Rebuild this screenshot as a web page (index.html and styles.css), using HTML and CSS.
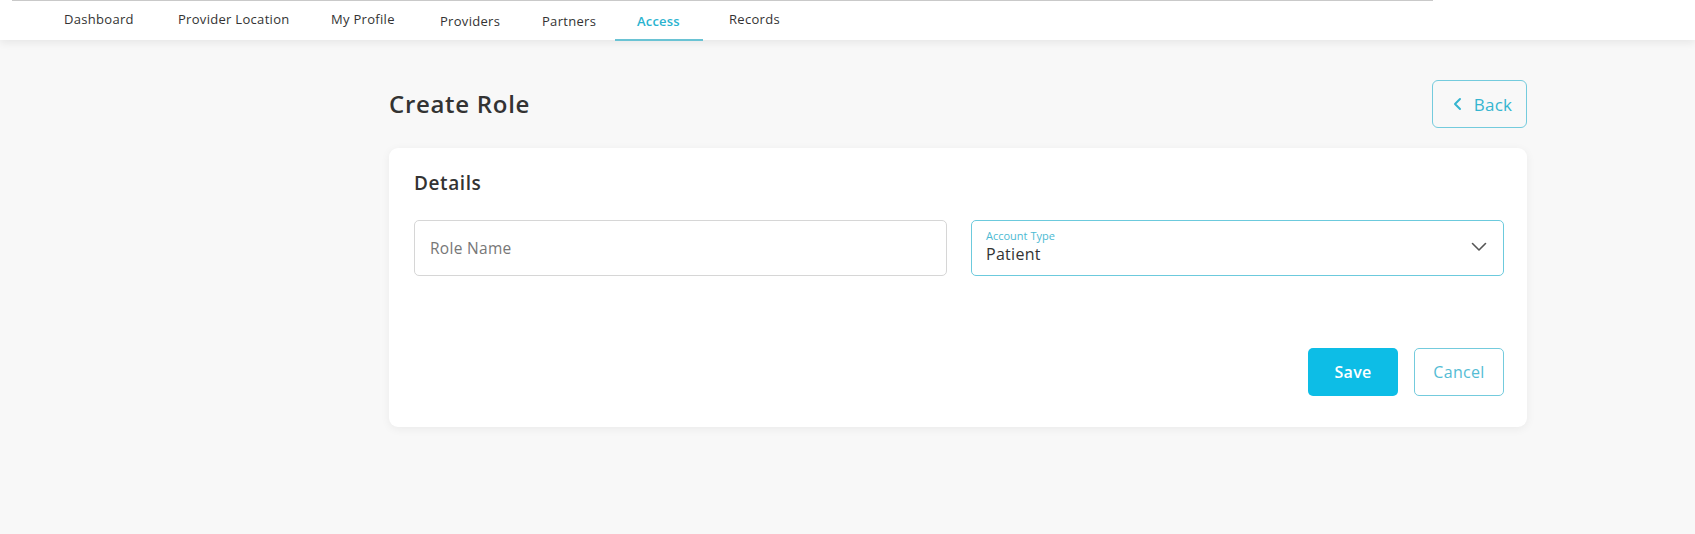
FILE: index.html
```html
<!DOCTYPE html>
<html lang="en">
<head>
<meta charset="utf-8">
<title>Create Role</title>
<link rel="stylesheet" href="styles.css">
</head>
<body>
<header class="topbar">
  <div class="topbar-inner">
    <nav class="nav">
      <a class="nav-item w1">Dashboard</a>
      <a class="nav-item w2">Provider Location</a>
      <a class="nav-item w3">My Profile</a>
      <a class="nav-item w4 low">Providers</a>
      <a class="nav-item w5 low">Partners</a>
      <a class="nav-item w6 low active">Access</a>
      <a class="nav-item w7">Records</a>
    </nav>
  </div>
</header>
<main class="page">
  <div class="spacer"></div>
  <section class="content">
    <div class="title-row">
      <h1 class="title">Create Role</h1>
      <button class="btn-back">
        <svg class="back-icon" width="14" height="14" viewBox="0 0 14 14"><path d="M9 2 L4 7 L9 12" fill="none" stroke="currentColor" stroke-width="2" stroke-linecap="round" stroke-linejoin="round"/></svg>
        <span>Back</span>
      </button>
    </div>
    <div class="card">
      <h2 class="card-title">Details</h2>
      <div class="fields">
        <div class="field">
          <span class="placeholder">Role Name</span>
        </div>
        <div class="field field-select">
          <div class="select-text">
            <span class="select-label">Account Type</span>
            <span class="select-value">Patient</span>
          </div>
          <svg class="chev" width="16" height="10" viewBox="0 0 16 10"><path d="M1.5 1.5 L8 8 L14.5 1.5" fill="none" stroke="#555" stroke-width="1.6" stroke-linecap="round" stroke-linejoin="round"/></svg>
        </div>
      </div>
      <div class="actions">
        <button class="btn btn-primary">Save</button>
        <button class="btn btn-outline">Cancel</button>
      </div>
    </div>
  </section>
</main>
</body>
</html>
```
FILE: styles.css
```css
* { box-sizing: border-box; }
html, body { margin: 0; padding: 0; }
body {
  background: #f8f8f8;
  font-family: "Open Sans", "Noto Sans", sans-serif;
  color: #333;
  width: 1695px;
  height: 534px;
  overflow: hidden;
}
.topbar {
  height: 40px;
  background: #fff;
  box-shadow: 0 3px 8px rgba(0,0,0,0.07);
  position: relative;
  z-index: 1;
}
.topbar-inner {
  margin-left: 12px;
  width: 1421px;
  height: 40px;
  border-top: 1px solid #c9c9c9;
}
.nav {
  display: flex;
  height: 39px;
  padding-left: 30px;
}
.nav-item {
  display: flex;
  align-items: center;
  padding: 0 0 4px 22px;
  font-size: 13px;
  color: #333;
  letter-spacing: 0.3px;
  height: 39px;
  white-space: nowrap;
}
.nav-item.low { padding-top: 1px; padding-bottom: 0; }
.w1 { width: 114px; }
.w2 { width: 153px; }
.w3 { width: 109px; }
.w4 { width: 102px; }
.w5 { width: 73px; padding-right: 0; }
.w6 { width: 88px; margin-left: 22px; }
.w7 { width: 95px; padding-left: 26px; }
.nav-item.active {
  color: #29b3cf;
  font-weight: 600;
  border-bottom: 2px solid #6ac3d4;
  height: 40px;
  letter-spacing: 0.2px;
}
.page {
  display: grid;
  grid-template-columns: 389px 1138px;
}
.title-row {
  display: flex;
  align-items: center;
  justify-content: space-between;
  margin-top: 40px;
  height: 48px;
}
.title {
  margin: 0 0 2px 0;
  font-size: 24px;
  font-weight: 600;
  color: #333;
  letter-spacing: 0.7px;
}
.btn-back {
  width: 95px;
  height: 48px;
  border: 1.5px solid #74cbdd;
  border-radius: 6px;
  background: transparent;
  color: #35b5d0;
  font-family: inherit;
  font-size: 17px;
  letter-spacing: 0.3px;
  display: flex;
  align-items: center;
  justify-content: center;
  gap: 9px;
  padding: 0 0 0 4px;
}
.back-icon { color: #35b5d0; }
.card {
  margin-top: 20px;
  background: #fff;
  border-radius: 9px;
  box-shadow: 0 2px 10px rgba(0,0,0,0.06);
  padding: 22px 23px 31px 25px;
}
.card-title {
  margin: 0;
  font-size: 19px;
  font-weight: 600;
  line-height: 26px;
  color: #333;
  letter-spacing: 0.6px;
}
.fields {
  display: grid;
  grid-template-columns: 1fr 1fr;
  gap: 24px;
  margin-top: 24px;
}
.field {
  height: 56px;
  border: 1px solid #d6d6d6;
  border-radius: 5px;
  display: flex;
  align-items: center;
  padding: 0 15px;
}
.placeholder {
  font-size: 15.5px;
  color: #777;
  letter-spacing: 0.3px;
}
.field-select {
  border: 1.5px solid #6ccadd;
  justify-content: space-between;
  padding: 0 14px 0 14px;
}
.select-text {
  display: flex;
  flex-direction: column;
  padding-bottom: 2px;
}
.select-label {
  font-size: 11px;
  color: #4cbad3;
  line-height: 14px;
}
.select-value {
  font-size: 16px;
  color: #333;
  line-height: 22px;
  letter-spacing: 0.3px;
}
.chev { margin-right: 2px; margin-top: -2px; }
.actions {
  display: flex;
  justify-content: flex-end;
  gap: 16px;
  margin-top: 72px;
}
.btn {
  width: 90px;
  height: 48px;
  border-radius: 5px;
  font-family: inherit;
  font-size: 16px;
  font-weight: 600;
  letter-spacing: 0.3px;
}
.btn-primary {
  background: #0dbde6;
  border: none;
  color: #fff;
}
.btn-outline {
  background: #fff;
  border: 1.5px solid #74cbdd;
  color: #54bcd4;
  font-weight: 500;
}
```
